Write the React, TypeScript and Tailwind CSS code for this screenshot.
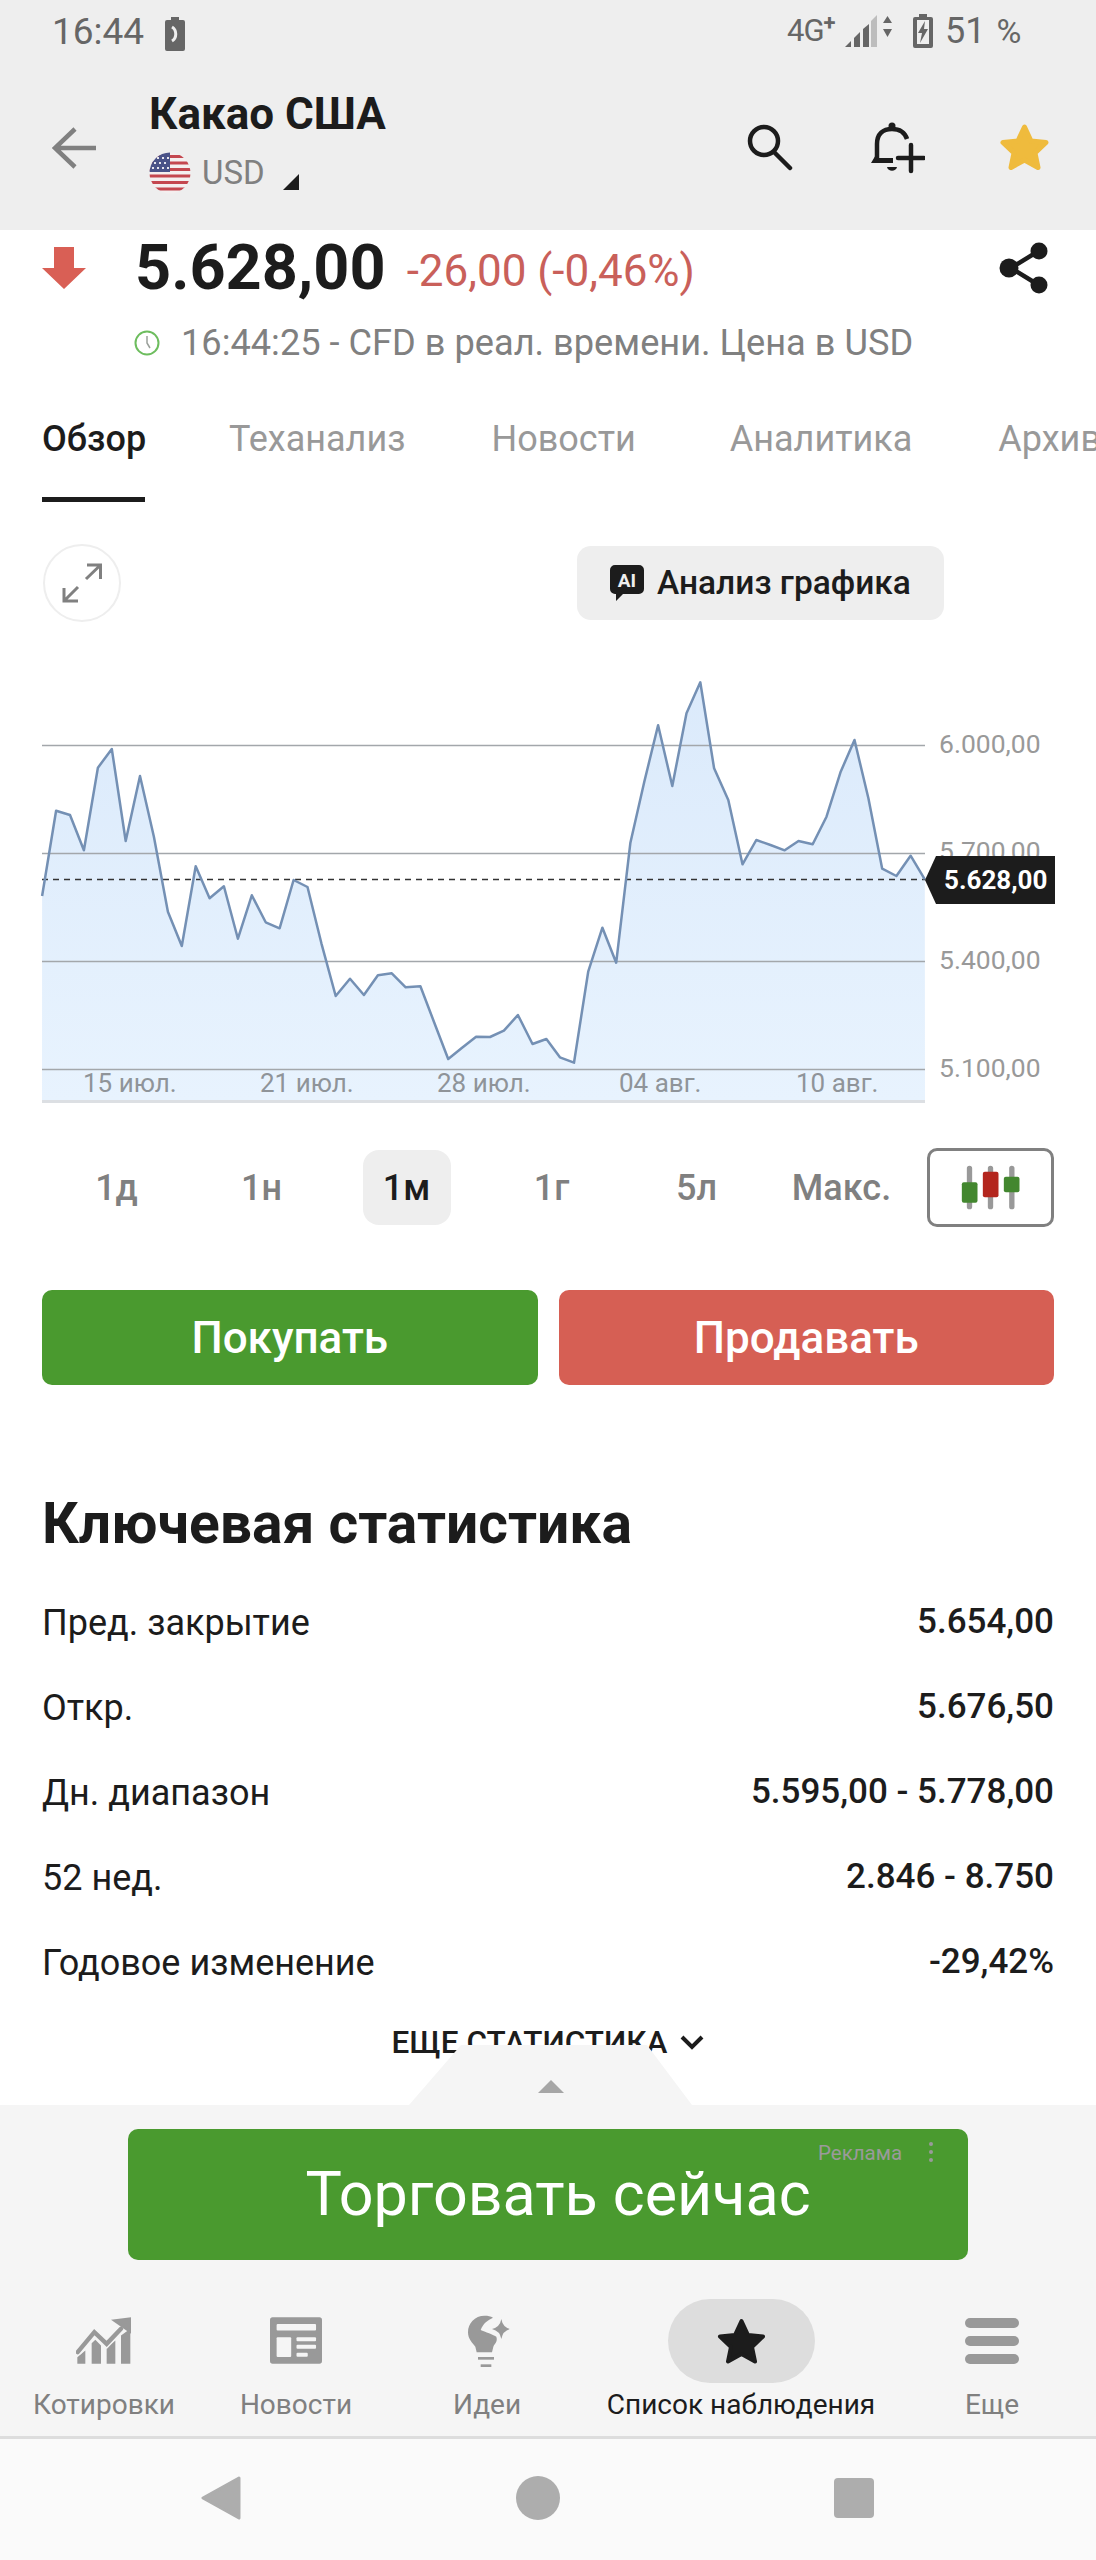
import React from 'react';

const LEFT_POINTS = [
  [118, 738], [157, 482], [196, 495], [235, 601], [274, 353], [313, 297], [352, 573], [392, 378], [431, 560], [470, 785],
  [509, 888], [548, 649], [587, 745], [627, 709], [666, 866], [705, 736], [744, 817], [783, 835], [822, 690], [861, 711],
  [900, 880], [940, 1038], [980, 986], [1019, 1035], [1058, 976], [1097, 970], [1136, 1012], [1177, 1009], [1216, 1118],
  [1255, 1227], [1294, 1193], [1333, 1160], [1372, 1161], [1411, 1142], [1450, 1095], [1491, 1182], [1530, 1167],
];
const RIGHT_POINTS = [
  [56, 1222], [96, 1238], [136, 965], [176, 833], [215, 938], [255, 578], [294, 395], [333, 226], [373, 408], [413, 190],
  [452, 97], [491, 355], [531, 450], [571, 643], [610, 570], [650, 585], [690, 601], [729, 573], [769, 583], [808, 500],
  [848, 365], [887, 270], [926, 445], [965, 656], [1005, 678], [1045, 617], [1085, 688],
];
const POINTS = [
  ...LEFT_POINTS.map(([x, y]) => [x / 2.8, y / 3]),
  ...RIGHT_POINTS.map(([x, y]) => [540 + x / 2.82, y / 3]),
].map(([x, y]) => `${x.toFixed(1)},${y.toFixed(1)}`);

const LINE_PATH = `M${POINTS.join(' L')}`;
const AREA_PATH = `${LINE_PATH} L925,451 L42,451 Z`;

const DATES = [
  { label: '15 июл.', left: 'left-[83px]' },
  { label: '21 июл.', left: 'left-[260px]' },
  { label: '28 июл.', left: 'left-[437px]' },
  { label: '04 авг.', left: 'left-[619px]' },
  { label: '10 авг.', left: 'left-[796px]' },
];

const PRICES = [
  { label: '6.000,00', top: 'top-[76px]' },
  { label: '5.700,00', top: 'top-[183px]' },
  { label: '5.400,00', top: 'top-[292px]' },
  { label: '5.100,00', top: 'top-[400px]' },
];

const PERIODS = ['1д', '1н', '1м', '1г', '5л', 'Макс.'];

const STATS = [
  ['Пред. закрытие', '5.654,00'],
  ['Откр.', '5.676,50'],
  ['Дн. диапазон', '5.595,00 - 5.778,00'],
  ['52 нед.', '2.846 - 8.750'],
  ['Годовое изменение', '-29,42%'],
];

function StatusBar() {
  return (
    <div className="relative h-[62px] text-[#666666]">
      <div className="absolute left-[52px] top-[11px] flex items-center">
        <span className="text-[37px] leading-[42px]">16:44</span>
        <svg width="20" height="34" viewBox="0 0 20 34" className="ml-[21px] mt-[4px]">
          <path d="M6 0h8v3h4a2 2 0 0 1 2 2v27a2 2 0 0 1-2 2H2a2 2 0 0 1-2-2V5a2 2 0 0 1 2-2h4z" fill="#666666" />
          <path d="M7 10c5 3 5 11 0 14" fill="none" stroke="#eeeeee" strokeWidth="3" />
        </svg>
      </div>
      <div className="absolute left-[787px] top-[13px] flex items-start">
        <span className="w-[50px] text-[31px] leading-[36px] tracking-[-1px]">4G<sup className="text-[22px] font-bold">+</sup></span>
        <svg width="48" height="32" viewBox="0 0 48 32" className="ml-[8px] mt-[2px]">
          <path d="M0 32 L6 26 V32Z" fill="#666666" />
          <path d="M9 23 L15 17 V32 H9Z" fill="#666666" />
          <path d="M18 14 L24 9 V32 H18Z" fill="#666666" />
          <path d="M26 6 L32 0 V32 H26Z" fill="#bdbdbd" />
          <path d="M42.5 1 L47 8 H38Z M38 14 H47 L42.5 22Z" fill="#666666" />
        </svg>
        <svg width="20" height="34" viewBox="0 0 20 34" className="ml-[20px] mt-[1px]">
          <path d="M6 0h8v3h4a2 2 0 0 1 2 2v27a2 2 0 0 1-2 2H2a2 2 0 0 1-2-2V5a2 2 0 0 1 2-2h4z" fill="#666666" />
          <path d="M4 6h12v24H4z" fill="#eeeeee" />
          <path d="M12 7 L5 19 H9 L7 29 L15 15 H11Z" fill="#666666" />
        </svg>
        <span className="ml-[12px] text-[36px] font-normal leading-[36px]">51</span>
        <span className="ml-[11px] text-[34px] leading-[36px]">%</span>
      </div>
    </div>
  );
}

function Toolbar() {
  return (
    <div className="flex h-[168px] items-start pl-[52px]">
      <svg width="44" height="42" viewBox="0 0 44 42" className="mt-[65px]">
        <path d="M44 21 H4 M23 2 L3 21 L23 40" fill="none" stroke="#808080" strokeWidth="4.5" />
      </svg>
      <div className="ml-[53px] w-[600px]">
        <div className="mt-[29px] h-[46px] text-[44px] font-bold leading-[46px] text-[#1c1c1c]">Какао США</div>
        <div className="mt-[15px] flex items-center">
          <svg width="42" height="42" viewBox="0 0 42 42">
            <defs>
              <clipPath id="flagClip"><circle cx="21" cy="21" r="20.5" /></clipPath>
            </defs>
            <g clipPath="url(#flagClip)">
              <rect width="42" height="42" fill="#f4efef" />
              <path d="M0 3h42v3H0zM0 9.500h42v3H0zM0 16h42v3H0zM0 22.500h42v3H0zM0 29h42v3H0zM0 35.500h42v3H0z" fill="#c4474f" />
              <rect width="21" height="20" fill="#4a5388" />
              <path d="M3 5h2v2H3zM8 5h2v2H8zM13 5h2v2h-2zM18 5h2v2h-2zM5 10h2v2H5zM10 10h2v2h-2zM15 10h2v2h-2zM3 15h2v2H3zM8 15h2v2H8zM13 15h2v2h-2zM18 15h2v2h-2z" fill="#e6e6ee" />
            </g>
          </svg>
          <span className="ml-[11px] text-[33px] leading-[40px] text-[#808080]">USD</span>
          <svg width="16" height="16" viewBox="0 0 16 16" className="ml-[18px] mt-[18px]">
            <path d="M16 0 V16 H0Z" fill="#1c1c1c" />
          </svg>
        </div>
      </div>
      <svg width="48" height="48" viewBox="0 0 48 48" className="ml-[-3px] mt-[61px]">
        <circle cx="18" cy="18" r="14" fill="none" stroke="#1c1c1c" strokeWidth="4.500" />
        <path d="M28 29 L44 45" stroke="#1c1c1c" strokeWidth="4.500" strokeLinecap="round" />
      </svg>
      <svg width="54" height="52" viewBox="0 0 54 52" className="ml-[77px] mt-[60px]">
        <circle cx="21" cy="4" r="3.500" fill="#1c1c1c" />
        <path d="M6 36 V22 C6 12 12 7 21 7 C29 7 34 11 36 17" fill="none" stroke="#1c1c1c" strokeWidth="4.500" />
        <path d="M0 41 L6 31 V36 H22 V41Z" fill="#1c1c1c" />
        <path d="M16 45 H26 C25 50 17 50 16 45Z" fill="#1c1c1c" />
        <path d="M27 36 H53 M40 23 V49" stroke="#1c1c1c" strokeWidth="4.500" strokeLinecap="round" />
      </svg>
      <svg width="49" height="46" viewBox="0 0 49 46" className="ml-[75px] mt-[62px]">
        <path d="M24.500 3 L31 17 L46 18.500 L35 29 L38 43.500 L24.500 36 L11 43.500 L14 29 L3 18.500 L18 17Z" fill="#efbb3d" stroke="#efbb3d" strokeWidth="5" strokeLinejoin="round" />
      </svg>
    </div>
  );
}

function PriceRows() {
  return (
    <>
      <div className="flex h-[75px] items-center pl-[42px]">
        <svg width="44" height="42" viewBox="0 0 44 42">
          <path d="M12 0 H32 V21 H44 L22 42 L0 21 H12Z" fill="#d95f55" />
        </svg>
        <span className="ml-[49px] text-[63px] font-bold leading-[75px] text-[#1c1c1c]">5.628,00</span>
        <span className="ml-[21px] mt-[7px] text-[44px] leading-[50px] text-[#c9605a]">-26,00 (-0,46%)</span>
        <svg width="50" height="52" viewBox="0 0 50 52" className="ml-[304px]">
          <path d="M38 10 L12 26 L38 42" fill="none" stroke="#1c1c1c" strokeWidth="4.500" />
          <circle cx="40" cy="9" r="8.500" fill="#1c1c1c" />
          <circle cx="10" cy="26" r="9.500" fill="#1c1c1c" />
          <circle cx="40" cy="43" r="8.500" fill="#1c1c1c" />
        </svg>
      </div>
      <div className="flex h-[76px] items-center pl-[134px]">
        <svg width="26" height="26" viewBox="0 0 26 26">
          <circle cx="13" cy="13" r="11.500" fill="none" stroke="#6dbd5e" strokeWidth="2" />
          <path d="M13 6 V13 L16 18" fill="none" stroke="#9aa09a" strokeWidth="1.500" />
        </svg>
        <span className="ml-[21px] text-[36.2px] leading-[44px] text-[#808080]">16:44:25 - CFD в реал. времени. Цена в USD</span>
      </div>
    </>
  );
}

function Tabs() {
  return (
    <div className="flex h-[123px] overflow-hidden whitespace-nowrap pl-[42px] text-[36px] text-[#999999]">
      <div className="flex w-[103px] shrink-0 flex-col">
        <span className="flex h-[116px] items-center font-medium text-[#1c1c1c]">Обзор</span>
        <div className="h-[5px] bg-[#1c1c1c]" />
      </div>
      <span className="ml-[84px] flex h-[116px] items-center">Теханализ</span>
      <span className="ml-[86px] flex h-[116px] items-center">Новости</span>
      <span className="ml-[94px] flex h-[116px] items-center">Аналитика</span>
      <span className="ml-[86px] flex h-[116px] items-center">Архив</span>
    </div>
  );
}

function ChartTools() {
  return (
    <div className="mt-[40px] flex h-[78px] items-center pl-[43px]">
      <div className="flex h-[78px] w-[78px] items-center justify-center rounded-full border-2 border-[#eeeeee]">
        <svg width="40" height="40" viewBox="0 0 40 40">
          <path d="M25 2 H38.500 V16 M38.500 2 L24 16 M2 25 V38 H16 M2 38 L16 24" fill="none" stroke="#808080" strokeWidth="3" />
        </svg>
      </div>
      <div className="ml-[456px] flex h-[74px] w-[367px] items-center rounded-[14px] bg-[#eeeeee] pl-[33px]">
        <svg width="34" height="36" viewBox="0 0 34 36">
          <path d="M5 0 H29 a5 5 0 0 1 5 5 V24 a5 5 0 0 1-5 5 H13 L6 36 V29 H5 a5 5 0 0 1-5-5 V5 a5 5 0 0 1 5-5z" fill="#1c1c1c" />
          <text x="17" y="22" textAnchor="middle" fontSize="19" fontWeight="700" fill="#eeeeee">AI</text>
        </svg>
        <span className="ml-[13px] text-[33.5px] font-medium leading-[44px] text-[#1c1c1c]">Анализ графика</span>
      </div>
    </div>
  );
}

function Chart() {
  return (
    <div className="relative mt-[28px] h-[460px]">
      <svg width="1096" height="460" viewBox="0 0 1096 460" className="block">
        <defs>
          <linearGradient id="areaFill" gradientUnits="userSpaceOnUse" x1="0" y1="32" x2="0" y2="451">
            <stop offset="0" stopColor="#dbeafb" />
            <stop offset="1" stopColor="#e8f3fe" />
          </linearGradient>
        </defs>
        <path d={AREA_PATH} fill="url(#areaFill)" />
        <path d="M42 95.500H925M42 203.500H925M42 311.500H925M42 419.500H925" stroke="#a3a7ab" strokeWidth="1.500" />
        <path d="M42 229.500H925" stroke="#333333" strokeWidth="1.500" strokeDasharray="6 5" />
        <path d={LINE_PATH} fill="none" stroke="#7490b4" strokeWidth="2.500" strokeLinejoin="round" />
        <rect x="42" y="450" width="883" height="3" fill="#dcdfe3" />
      </svg>
      {DATES.map((d) => (
        <span key={d.label} className={`absolute top-[417px] text-[26px] leading-[32px] text-[#8f9499] ${d.left}`}>
          {d.label}
        </span>
      ))}
      {PRICES.map((p) => (
        <span key={p.label} className={`absolute left-[939px] text-[26.5px] leading-[36px] text-[#999999] ${p.top}`}>
          {p.label}
        </span>
      ))}
      <div className="absolute left-[925px] top-[206px] flex h-[48px] w-[130px] items-center bg-[#1c1c1c] pl-[19px] text-[26px] font-bold text-white [clip-path:polygon(0_50%,11px_0,100%_0,100%_100%,11px_100%)]">
        5.628,00
      </div>
    </div>
  );
}

function Periods() {
  return (
    <div className="mt-[38px] flex h-[79px] items-center pl-[44px]">
      {PERIODS.map((p) => (
        <div key={p} className="flex w-[145px] shrink-0 justify-center">
          <span
            className={
              p === '1м'
                ? 'flex h-[75px] w-[88px] items-center justify-center rounded-[16px] bg-[#eeeeee] text-[36px] font-medium text-[#1c1c1c]'
                : 'flex h-[75px] items-center justify-center text-[36px] font-medium text-[#808080]'
            }
          >
            {p}
          </span>
        </div>
      ))}
      <div className="ml-[13px] flex h-[79px] w-[127px] items-center justify-center rounded-[10px] border-[3px] border-[#808080]">
        <svg width="62" height="45" viewBox="120 75 185 135">
          <path d="M148 85V200M211 85V200M275 85V200" stroke="#999999" strokeWidth="16" strokeLinecap="round" />
          <rect x="125" y="127" width="47" height="61" rx="6" fill="#43872f" />
          <rect x="188" y="95" width="47" height="77" rx="6" fill="#b3261e" />
          <rect x="251" y="110" width="47" height="47" rx="6" fill="#43872f" />
        </svg>
      </div>
    </div>
  );
}

function TradeButtons() {
  return (
    <div className="mt-[63px] flex h-[95px] gap-[21px] px-[42px] text-[44px] font-medium text-white">
      <div className="flex flex-1 items-center justify-center rounded-[10px] bg-[#4a9a2f]">Покупать</div>
      <div className="flex flex-1 items-center justify-center rounded-[10px] bg-[#d65f54]">Продавать</div>
    </div>
  );
}

function KeyStats() {
  return (
    <>
      <h2 className="mt-[104px] h-[70px] pl-[42px] text-[57px] font-bold leading-[70px] text-[#1c1c1c]">Ключевая статистика</h2>
      <div className="mt-[21px] px-[42px] text-[36px] text-[#1c1c1c]">
        {STATS.map(([label, value]) => (
          <div key={label} className="flex h-[85px] items-center justify-between">
            <span>{label}</span>
            <span className="text-[35px] font-medium">{value}</span>
          </div>
        ))}
      </div>
      <div className="flex h-[76px] items-center justify-center text-[31.5px] font-medium text-[#1c1c1c]">
        <span>ЕЩЕ СТАТИСТИКА</span>
        <svg width="24" height="16" viewBox="0 0 24 16" className="ml-[13px]">
          <path d="M2 2 L12 12 L22 2" fill="none" stroke="#1c1c1c" strokeWidth="4" />
        </svg>
      </div>
    </>
  );
}

function AdPanel() {
  return (
    <div className="relative h-[148px] pt-[24px]">
      <div className="absolute left-[409px] top-[-60px] flex h-[60px] w-[283px] justify-center bg-[#f5f5f5] pt-[35px] [clip-path:polygon(52px_0,238px_0,100%_100%,0_100%)]">
        <svg width="26" height="13" viewBox="0 0 26 13">
          <path d="M13 0 L26 13 H0Z" fill="#a6a6a6" />
        </svg>
      </div>
      <div className="relative mx-[128px] flex h-[131px] items-center justify-center rounded-[10px] bg-[#4a9a2f] pl-[20px] text-[61px] text-white">
        <span>Торговать сейчас</span>
        <span className="absolute left-[690px] top-[10px] text-[20.5px] leading-[28px] text-[#9a9a9a]">Реклама</span>
        <span className="absolute left-[801px] top-[13px] flex flex-col gap-[4px]">
          <i className="h-[4px] w-[4px] rounded-full bg-[#9a9a9a]" />
          <i className="h-[4px] w-[4px] rounded-full bg-[#9a9a9a]" />
          <i className="h-[4px] w-[4px] rounded-full bg-[#9a9a9a]" />
        </span>
      </div>
    </div>
  );
}

function TabLabel({ children, active }: { children: React.ReactNode; active?: boolean }) {
  return (
    <span className={`mt-[4px] h-[36px] whitespace-nowrap text-[28px] leading-[36px] ${active ? 'text-[#1c1c1c]' : 'text-[#808080]'}`}>
      {children}
    </span>
  );
}

function BottomTabs() {
  return (
    <div className="grid h-[183px] grid-cols-[208px_176px_206px_302px_204px] pt-[46px]">
      <div className="flex flex-col items-center">
        <div className="flex h-[84px] items-center">
          <svg width="56" height="47" viewBox="0 0 168 140" className="mb-[2px]">
            <path d="M4 120 L28 100 V140 H4Z M47 78 L58 68 L75 85 V140 H47Z M92 92 L118 70 V140 H92Z M135 55 L163 35 V140 H135Z" fill="#999999" />
            <path d="M5 105 L55 45 L92 80 L135 35" fill="none" stroke="#f5f5f5" strokeWidth="22" />
            <path d="M5 105 L55 45 L92 80 L135 35" fill="none" stroke="#999999" strokeWidth="13" strokeLinecap="round" />
            <path d="M105 8 L165 0 V50Z" fill="#999999" />
          </svg>
        </div>
        <TabLabel>Котировки</TabLabel>
      </div>
      <div className="flex flex-col items-center">
        <div className="flex h-[84px] items-center">
          <svg width="52" height="47" viewBox="0 0 157 140" className="mb-[2px]">
            <rect width="157" height="140" rx="8" fill="#999999" />
            <rect x="20" y="20" width="119" height="20" rx="3" fill="#f5f5f5" />
            <rect x="20" y="60" width="44" height="60" rx="3" fill="#f5f5f5" />
            <rect x="80" y="60" width="59" height="12" rx="3" fill="#f5f5f5" />
            <rect x="80" y="83" width="59" height="12" rx="3" fill="#f5f5f5" />
            <rect x="80" y="107" width="34" height="12" rx="3" fill="#f5f5f5" />
          </svg>
        </div>
        <TabLabel>Новости</TabLabel>
      </div>
      <div className="flex flex-col items-center">
        <div className="flex h-[84px] items-center">
          <svg width="42" height="52" viewBox="0 0 126 156" className="ml-[4px]">
            <path d="M50 2 C20 2 0 25 0 52 C0 72 12 82 22 95 L26 112 H72 L76 95 C80 85 90 80 85 65 C78 60 50 50 38 45 C45 25 60 15 75 8 C68 3 60 2 50 2Z" fill="#999999" />
            <path d="M100 12 Q104 36 126 42 Q104 48 100 72 Q96 48 72 42 Q96 36 100 12Z" fill="#999999" />
            <rect x="30" y="126" width="48" height="8" fill="#999999" />
            <rect x="38" y="148" width="32" height="8" fill="#999999" />
          </svg>
        </div>
        <TabLabel>Идеи</TabLabel>
      </div>
      <div className="flex flex-col items-center">
        <div className="flex h-[84px] w-[147px] items-center justify-center rounded-[42px] bg-[#dddddd]">
          <svg width="49" height="46" viewBox="0 0 49 46">
            <path d="M24.500 3 L31 17 L46 18.500 L35 29 L38 43.500 L24.500 36 L11 43.500 L14 29 L3 18.500 L18 17Z" fill="#1c1c1c" stroke="#1c1c1c" strokeWidth="4" strokeLinejoin="round" />
          </svg>
        </div>
        <TabLabel active>Список наблюдения</TabLabel>
      </div>
      <div className="flex flex-col items-center pr-[4px]">
        <div className="flex h-[84px] w-[54px] flex-col justify-center gap-[8px]">
          <div className="h-[10px] rounded-full bg-[#999999]" />
          <div className="h-[10px] rounded-full bg-[#999999]" />
          <div className="h-[10px] rounded-full bg-[#999999]" />
        </div>
        <TabLabel>Еще</TabLabel>
      </div>
    </div>
  );
}

function NavBar() {
  return (
    <div className="flex h-[121px] items-center bg-[#fafafa] pl-[201px] pb-[4px]">
      <svg width="40" height="44" viewBox="0 0 40 44">
        <path d="M38 2 L2 22 L38 42Z" fill="#adadad" stroke="#adadad" strokeWidth="3" strokeLinejoin="round" />
      </svg>
      <div className="ml-[275px] h-[44px] w-[44px] rounded-full bg-[#adadad]" />
      <div className="ml-[274px] h-[40px] w-[40px] rounded-[4px] bg-[#adadad]" />
    </div>
  );
}

export default function App() {
  return (
    <div className="flex h-[2560px] w-[1096px] flex-col overflow-hidden bg-white font-['Roboto',sans-serif]">
      <div className="h-[230px] bg-[#eeeeee]">
        <StatusBar />
        <Toolbar />
      </div>
      <div className="h-[1875px] overflow-hidden">
        <PriceRows />
        <Tabs />
        <ChartTools />
        <Chart />
        <Periods />
        <TradeButtons />
        <KeyStats />
      </div>
      <div className="h-[331px] bg-[#f5f5f5]">
        <AdPanel />
        <BottomTabs />
      </div>
      <div className="h-[3px] bg-[#dddddd]" />
      <NavBar />
    </div>
  );
}
